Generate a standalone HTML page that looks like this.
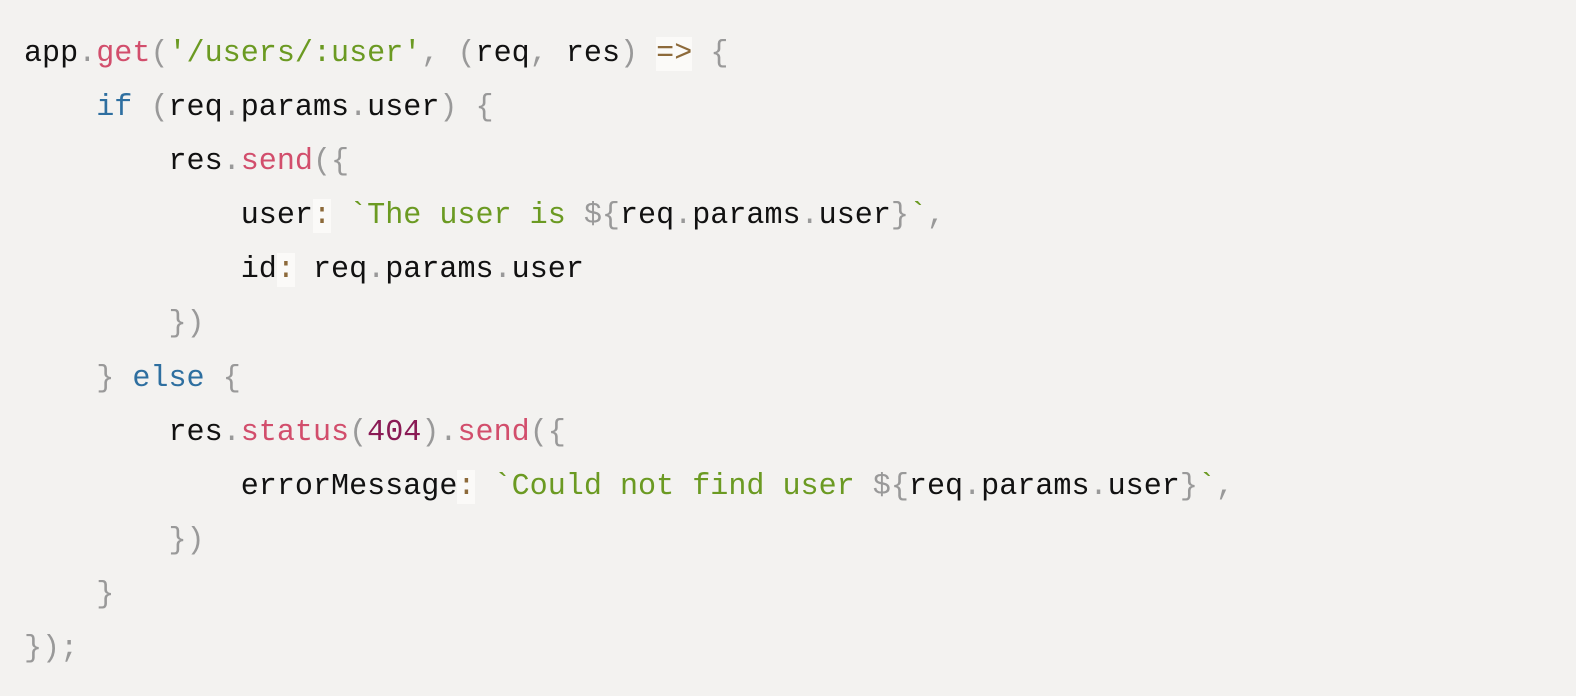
<!DOCTYPE html>
<html><head><style>
html,body{margin:0;padding:0;background:#f3f2f0;width:1576px;height:696px;overflow:hidden}
pre{margin:0;padding:27px 0 0 24px;font-family:"Liberation Mono",monospace;font-size:30.1px;line-height:54.1px;color:#111;}
.p{color:#999}.k{color:#2e6fa0}.s{color:#6b9a22}.f{color:#d24e6c}.n{color:#8a1a55}.o{color:#8d6a3a;background:#fbfaf8}
</style></head><body><pre>app<span class="p">.</span><span class="f">get</span><span class="p">(</span><span class="s">'/users/:user'</span><span class="p">,</span> <span class="p">(</span>req<span class="p">,</span> res<span class="p">)</span> <span class="o">=&gt;</span> <span class="p">{</span>
    <span class="k">if</span> <span class="p">(</span>req<span class="p">.</span>params<span class="p">.</span>user<span class="p">)</span> <span class="p">{</span>
        res<span class="p">.</span><span class="f">send</span><span class="p">({</span>
            user<span class="o">:</span> <span class="s">`The user is </span><span class="p">${</span>req<span class="p">.</span>params<span class="p">.</span>user<span class="p">}</span><span class="s">`</span><span class="p">,</span>
            id<span class="o">:</span> req<span class="p">.</span>params<span class="p">.</span>user
        <span class="p">})</span>
    <span class="p">}</span> <span class="k">else</span> <span class="p">{</span>
        res<span class="p">.</span><span class="f">status</span><span class="p">(</span><span class="n">404</span><span class="p">).</span><span class="f">send</span><span class="p">({</span>
            errorMessage<span class="o">:</span> <span class="s">`Could not find user </span><span class="p">${</span>req<span class="p">.</span>params<span class="p">.</span>user<span class="p">}</span><span class="s">`</span><span class="p">,</span>
        <span class="p">})</span>
    <span class="p">}</span>
<span class="p">});</span></pre></body></html>
